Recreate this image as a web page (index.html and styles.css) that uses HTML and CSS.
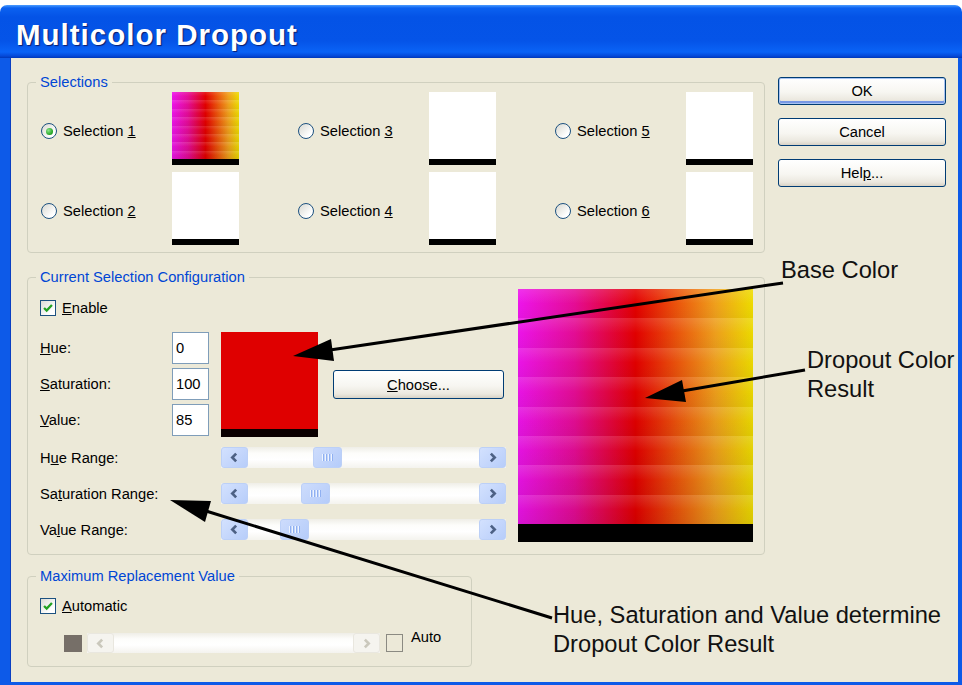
FILE: index.html
```html
<!DOCTYPE html>
<html lang="en">
<head>
  <meta charset="UTF-8" />
  <meta name="viewport" content="width=device-width, initial-scale=1" />
  <title>Multicolor Dropout</title>
  <link rel="stylesheet" href="styles.css">
</head>
<body>

<div class="screen">
  <div class="window">
    <div class="titlebar"><h1>Multicolor Dropout</h1></div>

    <div class="frame">
      <div class="client">

        <div class="groups">
          <!-- selections -->
          <div class="group selections">
            <div class="group-title">Selections</div>
            <div class="sel-grid">
              <div class="sel">
                <span class="radio"><span class="dot checked"></span><span>Selection <u>1</u></span></span>
                <div class="swatch grad small"></div>
              </div>
              <div class="sel">
                <span class="radio"><span class="dot"></span><span>Selection <u>3</u></span></span>
                <div class="swatch"></div>
              </div>
              <div class="sel">
                <span class="radio"><span class="dot"></span><span>Selection <u>5</u></span></span>
                <div class="swatch"></div>
              </div>
              <div class="sel">
                <span class="radio"><span class="dot"></span><span>Selection <u>2</u></span></span>
                <div class="swatch"></div>
              </div>
              <div class="sel">
                <span class="radio"><span class="dot"></span><span>Selection <u>4</u></span></span>
                <div class="swatch"></div>
              </div>
              <div class="sel">
                <span class="radio"><span class="dot"></span><span>Selection <u>6</u></span></span>
                <div class="swatch"></div>
              </div>
            </div>
          </div>

          <!-- current selection -->
          <div class="group config">
            <div class="group-title">Current Selection Configuration</div>
            <div class="config-body">
              <div class="config-left">
                <div class="check-row enable">
                  <span class="check on"><svg viewBox="0 0 16 16"><path d="M3.5 8 L6.5 11 L12.5 4.5" /></svg></span>
                  <span><u>E</u>nable</span>
                </div>

                <div class="hsv">
                  <div class="hsv-fields">
                    <span class="lbl"><u>H</u>ue:</span><span class="field">0</span>
                    <span class="lbl"><u>S</u>aturation:</span><span class="field">100</span>
                    <span class="lbl"><u>V</u>alue:</span><span class="field">85</span>
                  </div>
                  <div class="base-swatch"></div>
                  <button class="btn choose"><u>C</u>hoose...</button>
                </div>

                <div class="ranges">
                  <span class="lbl">H<u>u</u>e Range:</span>
                  <div class="scroll">
                    <span class="sb-btn"><svg viewBox="0 0 10 10"><path d="M6.5 1.5 L3 5 L6.5 8.5" /></svg></span>
                    <span class="sb-track"><span class="sb-thumb" style="margin-left:65px"><i></i><i></i><i></i><i></i></span></span>
                    <span class="sb-btn"><svg viewBox="0 0 10 10"><path d="M3.5 1.5 L7 5 L3.5 8.5" /></svg></span>
                  </div>
                  <span class="lbl">Sa<u>t</u>uration Range:</span>
                  <div class="scroll">
                    <span class="sb-btn"><svg viewBox="0 0 10 10"><path d="M6.5 1.5 L3 5 L6.5 8.5" /></svg></span>
                    <span class="sb-track"><span class="sb-thumb" style="margin-left:53px"><i></i><i></i><i></i><i></i></span></span>
                    <span class="sb-btn"><svg viewBox="0 0 10 10"><path d="M3.5 1.5 L7 5 L3.5 8.5" /></svg></span>
                  </div>
                  <span class="lbl">Va<u>l</u>ue Range:</span>
                  <div class="scroll">
                    <span class="sb-btn"><svg viewBox="0 0 10 10"><path d="M6.5 1.5 L3 5 L6.5 8.5" /></svg></span>
                    <span class="sb-track"><span class="sb-thumb" style="margin-left:32px"><i></i><i></i><i></i><i></i></span></span>
                    <span class="sb-btn"><svg viewBox="0 0 10 10"><path d="M3.5 1.5 L7 5 L3.5 8.5" /></svg></span>
                  </div>
                </div>
              </div>

              <div class="grad big"></div>
            </div>
          </div>

          <!-- max replacement -->
          <div class="group maxrep">
            <div class="group-title">Maximum Replacement Value</div>
            <div class="check-row auto">
              <span class="check on"><svg viewBox="0 0 16 16"><path d="M3.5 8 L6.5 11 L12.5 4.5" /></svg></span>
              <span><u>A</u>utomatic</span>
            </div>
            <div class="max-row">
              <span class="gray-box"></span>
              <div class="scroll disabled">
                <span class="sb-btn"><svg viewBox="0 0 10 10"><path d="M6.5 1.5 L3 5 L6.5 8.5" /></svg></span>
                <span class="sb-track"></span>
                <span class="sb-btn"><svg viewBox="0 0 10 10"><path d="M3.5 1.5 L7 5 L3.5 8.5" /></svg></span>
              </div>
              <span class="check off"></span>
              <span class="auto-lbl">Auto</span>
            </div>
          </div>
        </div>

        <div class="buttons">
          <button class="btn default">OK</button>
          <button class="btn">Cancel</button>
          <button class="btn">Hel<u>p</u>...</button>
        </div>

      </div>
    </div>
  </div>

  <!-- callouts drawn over the dialog -->
  <svg class="callouts" width="962" height="685" viewBox="0 0 962 685">
    <line x1="783" y1="283" x2="330" y2="350" />
    <polygon points="293,356 334,361 331,339" />
    <line x1="805" y1="370" x2="682" y2="391" />
    <polygon points="645,398 686,402 682,380" />
    <line x1="552" y1="618" x2="206" y2="511" />
    <polygon points="170,500 205,522 211,501" />
  </svg>
  <p class="note note-base">Base Color</p>
  <p class="note note-result">Dropout Color<br>Result</p>
  <p class="note note-hsv">Hue, Saturation and Value determine<br>Dropout Color Result</p>
</div>

</body>
</html>
```

FILE: styles.css
```css
body {
  margin: 0;
  background: #fff;
  font-family: "Liberation Sans", Arial, sans-serif;
  font-size: 14.7px;
  color: #000;
}
.screen {
  position: relative;
  width: 962px;
  height: 685px;
  padding-top: 5px;
  box-sizing: border-box;
  overflow: hidden;
}
.window {
  height: 680px;
  display: flex;
  flex-direction: column;
}
.titlebar {
  height: 53px;
  flex: none;
  box-sizing: border-box;
  padding: 7px 0 0 16px;
  display: flex;
  align-items: center;
  border-radius: 7px 7px 0 0;
  background: linear-gradient(to bottom, #4a9cff 0, #0b61f0 3px, #0453e6 12px, #0554e8 36px, #0a63f6 47px, #0549d8 51px, #0037b8 53px);
}
.titlebar h1 {
  margin: 0;
  font-size: 29.5px;
  font-weight: bold;
  letter-spacing: 1px;
  color: #fff;
  text-shadow: 1px 1px 1px #0a1d6e;
}
.frame {
  flex: 1;
  border-left: 10px solid #0d5ae8;
  border-right: 4px solid #0d5ae8;
  border-bottom: 3px solid #0d5ae8;
  display: flex;
}
.client {
  flex: 1;
  background: #ece9d8;
  display: flex;
  gap: 13px;
  padding: 19px 12px 0 17px;
  box-shadow: inset 1px 0 0 #0a3fc2;
}

/* group boxes */
.groups {
  width: 738px;
  margin-top: 5px;
  display: flex;
  flex-direction: column;
}
.group {
  border: 1px solid #d0d0bf;
  border-radius: 4px;
  box-sizing: border-box;
}
.group-title {
  width: fit-content;
  margin: -9px 0 0 8px;
  padding: 0 4px;
  line-height: 17px;
  background: #ece9d8;
  color: #0046d5;
}
.selections { height: 171px; }
.config { height: 278px; margin-top: 24px; }
.maxrep { width: 445px; height: 91px; margin-top: 21px; }

/* selections grid */
.sel-grid {
  display: grid;
  grid-template-columns: repeat(3, 257px);
  grid-auto-rows: 73px;
  row-gap: 7px;
  padding: 1px 0 0 13px;
}
.sel {
  display: flex;
  align-items: center;
}
.radio {
  width: 131px;
  display: flex;
  align-items: center;
  padding-top: 5px;
}
.dot {
  width: 16px;
  height: 16px;
  box-sizing: border-box;
  border: 1px solid #1c5180;
  border-radius: 50%;
  background: linear-gradient(135deg, #d8d8d0, #fff 75%);
  margin-right: 6px;
  display: grid;
  place-items: center;
}
.dot.checked::after {
  content: "";
  width: 7px;
  height: 7px;
  border-radius: 50%;
  background: radial-gradient(circle at 35% 35%, #8ae68a, #21a121 70%, #1a8a1a);
}
.swatch {
  width: 67px;
  height: 73px;
  box-sizing: border-box;
  background: #fff;
  border-bottom: 6px solid #000;
}

/* colour gradients */
.grad {
  --band: 29.4px;
  background:
    repeating-linear-gradient(to bottom, rgba(255,255,255,.13) 0, rgba(255,255,255,0) calc(var(--band) * .5), rgba(0,0,0,.03) var(--band)),
    linear-gradient(to bottom, rgba(0,0,0,0), rgba(0,0,0,.07)),
    linear-gradient(to right, #ee14ec 0%, #e60c96 24%, #e40000 50%, #ec560c 68%, #f0a01c 84%, #eedc00 100%);
  background-color: #e40000;
  box-sizing: border-box;
  border-bottom: 18px solid #000;
}
.grad.small {
  --band: 8.4px;
  border-bottom-width: 6px;
}
.grad.big {
  width: 235px;
  height: 253px;
  margin-top: 3px;
  flex: none;
}

/* current selection */
.config-body {
  display: flex;
  gap: 12px;
  padding: 0 11px 0 12px;
}
.config-left {
  width: 466px;
}
.check-row {
  display: flex;
  align-items: center;
  gap: 6px;
  height: 17px;
}
.enable { margin-top: 13px; }
.check {
  width: 16px;
  height: 16px;
  box-sizing: border-box;
  border: 1px solid #1c5180;
  background: linear-gradient(135deg, #dcdcd5, #fff 75%);
  flex: none;
}
.check svg {
  display: block;
  width: 14px;
  height: 14px;
  fill: none;
  stroke: #21a121;
  stroke-width: 2.6;
}
.check.off {
  width: 17px;
  height: 18px;
  border-color: #8b8a82;
  background: none;
}
.hsv {
  display: flex;
  align-items: flex-start;
  margin-top: 16px;
}
.hsv-fields {
  display: grid;
  grid-template-columns: 132px 37px;
  grid-auto-rows: 32px;
  row-gap: 4px;
  align-items: center;
}
.field {
  height: 32px;
  box-sizing: border-box;
  border: 1px solid #7f9db9;
  background: #fff;
  padding-left: 3px;
  display: flex;
  align-items: center;
}
.base-swatch {
  width: 97px;
  height: 105px;
  margin-left: 12px;
  box-sizing: border-box;
  background: #df0000;
  border-bottom: 8px solid #0a0000;
}
.btn {
  font-family: inherit;
  font-size: 14.7px;
  color: #000;
  width: 168px;
  height: 28px;
  padding: 0;
  border: 1px solid #003c74;
  border-radius: 3px;
  background: linear-gradient(#fff 0, #f7f6f1 55%, #ebe8df 85%, #d8d2c6 100%);
}
.btn.default {
  box-shadow: inset 0 0 0 1px #a8c3f1, inset 0 -2px 0 1px #7898e4;
}
.btn.choose {
  width: 171px;
  height: 29px;
  margin: 38px 0 0 15px;
}
.ranges {
  display: grid;
  grid-template-columns: 181px 285px;
  grid-auto-rows: 21px;
  row-gap: 15px;
  align-items: center;
  margin-top: 10px;
}

/* scrollbars */
.scroll {
  display: flex;
  height: 21px;
  background: linear-gradient(#efeee7, #fdfdfb 30%, #fff 60%, #f4f3ee);
}
.sb-btn {
  width: 27px;
  flex: none;
  box-sizing: border-box;
  border: 1px solid #bcd0f7;
  border-radius: 3px;
  background: linear-gradient(135deg, #d3e1fe, #b7cdfa);
  display: grid;
  place-items: center;
}
.sb-btn svg {
  width: 11px;
  height: 11px;
  fill: none;
  stroke: #4d6185;
  stroke-width: 2.4;
}
.sb-track {
  flex: 1;
  display: flex;
}
.sb-thumb {
  width: 29px;
  box-sizing: border-box;
  border: 1px solid #bcd0f7;
  border-radius: 3px;
  background: linear-gradient(135deg, #cddcfc, #b5ccfa);
  display: flex;
  justify-content: center;
  align-items: center;
  gap: 1px;
}
.sb-thumb i {
  width: 1px;
  height: 7px;
  background: #eef4fe;
  box-shadow: 1px 0 0 #8fb0f2;
  margin-right: 1px;
}
.scroll.disabled .sb-btn {
  border-color: #e9e7df;
  background: #f5f4ef;
}
.scroll.disabled .sb-btn svg {
  stroke: #cac8bc;
}

/* max replacement */
.auto { margin: 12px 0 0 12px; }
.max-row {
  display: flex;
  align-items: center;
  margin: 19px 0 0 36px;
}
.gray-box {
  width: 18px;
  height: 17px;
  background: #766f68;
  margin-right: 5px;
}
.max-row .scroll {
  width: 293px;
  height: 20px;
  margin-right: 6px;
}
.auto-lbl {
  margin-left: 8px;
  align-self: flex-start;
  margin-top: -4px;
}

.buttons {
  display: flex;
  flex-direction: column;
  gap: 13px;
}

/* callouts */
.callouts {
  position: absolute;
  left: 0;
  top: 0;
  pointer-events: none;
}
.callouts line {
  stroke: #000;
  stroke-width: 3;
}
.callouts polygon {
  fill: #000;
}
.note {
  position: absolute;
  margin: 0;
  font-size: 23.7px;
  line-height: 29px;
  color: #111;
}
.note-base { left: 781px; top: 256px; }
.note-result { left: 807px; top: 346px; }
.note-hsv { left: 553px; top: 601px; }
```
